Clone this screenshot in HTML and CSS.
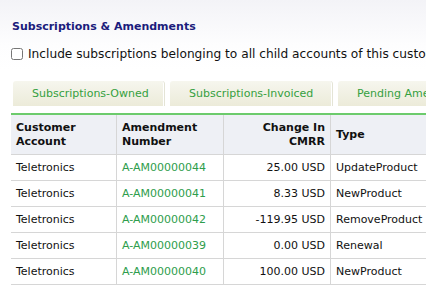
FILE: index.html
```html
<!DOCTYPE html>
<html lang="en">
<head>
  <meta charset="UTF-8" />
  <title>Subscriptions &amp; Amendments</title>
  <link rel="stylesheet" href="styles.css">
</head>
<body>

<div class="panel">
  <h2 class="title">Subscriptions &amp; Amendments</h2>

  <label class="child-check">
    <input type="checkbox">
    <span>Include subscriptions belonging to all child accounts of this customer</span>
  </label>

  <div class="tabs">
    <div class="tab tab-owned">Subscriptions-Owned</div>
    <div class="tab tab-invoiced">Subscriptions-Invoiced</div>
    <div class="tab tab-pending">Pending Amendments</div>
  </div>

  <div class="grid-wrap">
    <table class="grid">
      <thead>
        <tr>
          <th class="c-acct">Customer<br>Account</th>
          <th class="c-num">Amendment<br>Number</th>
          <th class="c-amt">Change In<br>CMRR</th>
          <th class="c-type">Type</th>
        </tr>
      </thead>
      <tbody>
        <tr>
          <td>Teletronics</td>
          <td><a href="#">A-AM00000044</a></td>
          <td class="c-amt">25.00 USD</td>
          <td>UpdateProduct</td>
        </tr>
        <tr>
          <td>Teletronics</td>
          <td><a href="#">A-AM00000041</a></td>
          <td class="c-amt">8.33 USD</td>
          <td>NewProduct</td>
        </tr>
        <tr>
          <td>Teletronics</td>
          <td><a href="#">A-AM00000042</a></td>
          <td class="c-amt">-119.95 USD</td>
          <td>RemoveProduct</td>
        </tr>
        <tr>
          <td>Teletronics</td>
          <td><a href="#">A-AM00000039</a></td>
          <td class="c-amt">0.00 USD</td>
          <td>Renewal</td>
        </tr>
        <tr>
          <td>Teletronics</td>
          <td><a href="#">A-AM00000040</a></td>
          <td class="c-amt">100.00 USD</td>
          <td>NewProduct</td>
        </tr>
      </tbody>
    </table>
  </div>
</div>

</body>
</html>
```

FILE: styles.css
```css
body {
  margin: 0;
  font-family: "DejaVu Sans", Verdana, sans-serif;
  font-size: 11px;
  color: #111;
  background: #fff;
}

.panel {
  width: 415px;
  padding: 0 0 0 11px;
  overflow: hidden;
  background: linear-gradient(to bottom, #f3f3f7 0, #fdfdfe 45px, #fff 70px);
}

.title {
  margin: 0;
  padding: 20px 0 0 1px;
  font-size: 11px;
  font-weight: bold;
  color: #1c1c7c;
  line-height: 14px;
}

.child-check {
  display: flex;
  align-items: center;
  gap: 5px;
  margin-top: 13px;
  font-size: 12.2px;
  white-space: nowrap;
}

.child-check input {
  margin: 0;
  width: 12px;
  height: 12px;
}

.tabs {
  display: flex;
  margin-top: 20px;
  padding-left: 2px;
  gap: 7px;
  white-space: nowrap;
}

.tab {
  height: 25px;
  line-height: 26px;
  padding: 0 19px;
  color: #35a040;
  background: linear-gradient(to bottom, #f6f6ee, #ecebd9);
  border-radius: 3px 3px 0 0;
  box-shadow: 1px 0 0 #fff, 2px 0 0 #e4e4d6;
}

.tab-owned { width: 112px; }
.tab-invoiced { width: 123px; }

.grid-wrap {
  margin-top: 7px;
  border-top: 2px solid #6ccb6c;
  overflow: hidden;
}

.grid {
  width: 500px;
  border-collapse: collapse;
  table-layout: fixed;
}

.grid th,
.grid td {
  border-bottom: 1px solid #d6d6d6;
  border-right: 1px solid #d6d6d6;
  padding: 0 5px;
  text-align: left;
  white-space: nowrap;
}

.grid th {
  background: #eef0f5;
  height: 39px;
  font-weight: bold;
  line-height: 14px;
}

.grid td {
  height: 25px;
}

.grid .c-acct { width: 95px; }
.grid .c-num { width: 96px; }
.grid th.c-amt { width: 96px; }
.grid .c-amt { text-align: right; }

.grid a {
  color: #2e9d4c;
  text-decoration: none;
}
```
